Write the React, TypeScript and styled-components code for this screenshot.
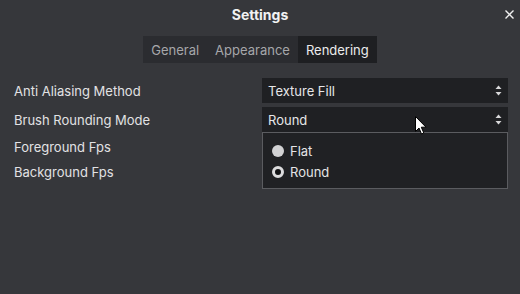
import { ReactElement } from 'react';
import styled, { createGlobalStyle } from 'styled-components';

const GlobalStyle = createGlobalStyle`
  html, body {
    margin: 0;
    padding: 0;
    background: #36373b;
  }
  body {
    font-family: Inter, 'Noto Sans', sans-serif;
    -webkit-font-smoothing: antialiased;
  }
`;

const Window = styled.div`
  position: relative;
  width: 520px;
  height: 294px;
  background: #36373b;
  color: #e4e4e6;
  overflow: hidden;
`;
const Header = styled.div`
  position: relative;
  height: 28px;
  display: flex;
  align-items: center;
  justify-content: center;
`;
const Title = styled.div`
  font-size: 14px;
  font-weight: 700;
  color: #f2f2f3;
`;
const CloseBtn = styled.button`
  position: absolute;
  right: 5px;
  top: 9px;
  width: 11px;
  height: 11px;
  padding: 0;
  border: none;
  background: none;
  display: flex;
  align-items: center;
  justify-content: center;
`;
const TabsRow = styled.div`
  display: flex;
  justify-content: center;
  margin-top: 8px;
`;
const TabBar = styled.div`
  display: flex;
  background: #2b2c30;
  height: 27px;
`;
const Tab = styled.div<{ $active?: boolean }>`
  display: flex;
  align-items: center;
  padding: 0 8px;
  font-size: 13px;
  color: ${(p) => (p.$active ? '#ebebec' : '#a6a7aa')};
  background: ${(p) => (p.$active ? '#1e1f22' : 'transparent')};
`;
const Rows = styled.div`
  display: grid;
  grid-template-columns: 1fr 246px;
  grid-template-rows: 25px 25px 21px 21px;
  row-gap: 4px;
  padding: 0 12px 0 14px;
  margin-top: 15px;
`;
const Label = styled.div`
  display: flex;
  align-items: center;
  font-size: 13px;
  color: #e2e2e4;
`;
const SelectWrap = styled.div`
  position: relative;
`;
const Select = styled.div`
  height: 25px;
  box-sizing: border-box;
  display: flex;
  align-items: center;
  justify-content: space-between;
  padding: 0 6px 0 6px;
  background: #1f2023;
  font-size: 13px;
  color: #e6e6e8;
`;
const Menu = styled.div`
  position: absolute;
  left: 0;
  right: 0;
  top: 25px;
  height: 57px;
  box-sizing: border-box;
  padding: 7px 0 0 9px;
  background: #202124;
  border: 1px solid #5b5c60;
  z-index: 2;
`;
const Option = styled.div`
  height: 21px;
  display: flex;
  align-items: center;
  gap: 6px;
  font-size: 13px;
  color: #e4e4e6;
`;
const Radio = styled.span<{ $checked?: boolean }>`
  width: 12px;
  height: 12px;
  border-radius: 50%;
  box-sizing: border-box;
  background: ${(p) => (p.$checked ? '#111214' : '#d2d2d4')};
  border: ${(p) => (p.$checked ? '3px solid #dcdcde' : 'none')};
`;
const Cursor = styled.svg`
  position: absolute;
  left: 415px;
  top: 116px;
  z-index: 5;
`;

function Arrows(): ReactElement {
  return (
    <svg width="7" height="11" viewBox="0 0 7 11">
      <path d="M3.5 0.5 L6.5 4 H0.5 Z" fill="#d8d8da" />
      <path d="M3.5 10.5 L6.5 7 H0.5 Z" fill="#d8d8da" />
    </svg>
  );
}

function App(): ReactElement {
  return (
    <Window>
      <GlobalStyle />
      <Header>
        <Title>Settings</Title>
        <CloseBtn>
          <svg width="9" height="9" viewBox="0 0 9 9">
            <path d="M0.5 0.5 L8.5 8.5 M8.5 0.5 L0.5 8.5" stroke="#f0f0f0" strokeWidth="1.4" />
          </svg>
        </CloseBtn>
      </Header>

      <TabsRow>
        <TabBar>
          <Tab>General</Tab>
          <Tab>Appearance</Tab>
          <Tab $active>Rendering</Tab>
        </TabBar>
      </TabsRow>

      <Rows>
        <Label>Anti Aliasing Method</Label>
        <SelectWrap>
          <Select>
            Texture Fill
            <Arrows />
          </Select>
        </SelectWrap>

        <Label>Brush Rounding Mode</Label>
        <SelectWrap>
          <Select>
            Round
            <Arrows />
          </Select>
          <Menu>
            <Option>
              <Radio />
              Flat
            </Option>
            <Option>
              <Radio $checked />
              Round
            </Option>
          </Menu>
        </SelectWrap>

        <Label>Foreground Fps</Label>
        <div />
        <Label>Background Fps</Label>
        <div />
      </Rows>

      <Cursor width="13" height="20" viewBox="0 0 13 20">
        <path d="M0.5 0.5 L0.5 15.5 L4 12 L6.5 18 L8.8 17 L6.3 11.2 L11 11.2 Z" fill="#ffffff" stroke="#000000" strokeWidth="1" />
      </Cursor>
    </Window>
  );
}

export default App;
